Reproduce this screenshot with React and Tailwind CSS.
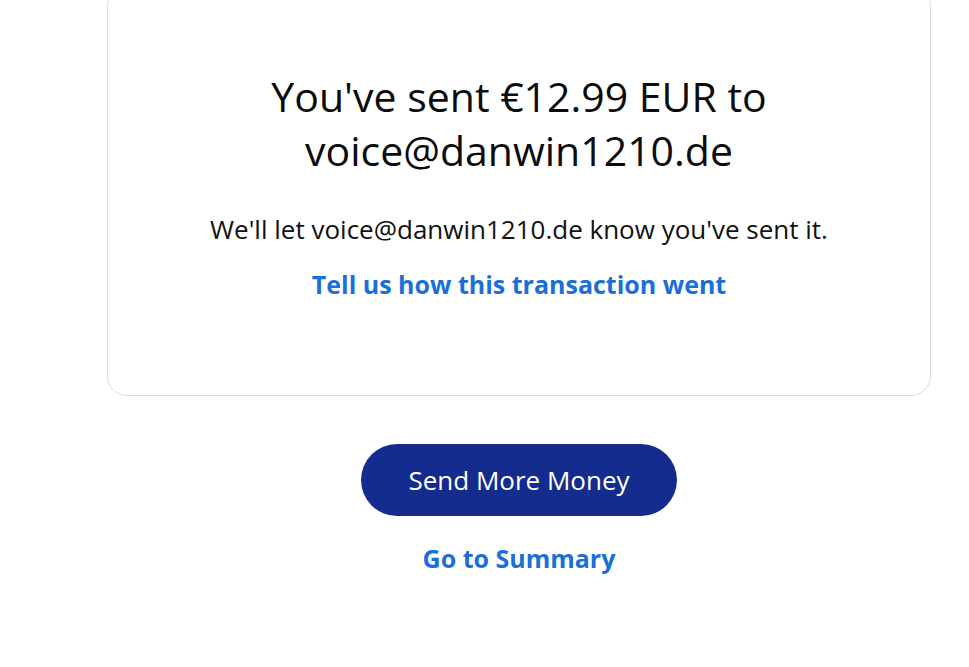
export default function App() {
  return (
    <div className="min-h-screen w-full overflow-hidden bg-white" style={{ fontFamily: "'Open Sans', 'Noto Sans', sans-serif" }}>
      <div className="ml-[107px] mt-[-14px] flex w-[824px] flex-col items-center rounded-[20px] border border-[#dcdcdc] px-10 pb-[95px] pt-[82px] text-center">
        <h1 className="text-[41px] font-normal leading-[54px] text-[#0b0b0b]">
          You've sent €12.99 EUR to
          <br />
          voice@danwin1210.de
        </h1>
        <p className="mt-[36px] text-[26px] leading-[32px] text-[#111]">
          We'll let voice@danwin1210.de know you've sent it.
        </p>
        <a href="#" className="mt-[23px] text-[25px] font-bold leading-[32px] text-[#1a6fd8]">
          Tell us how this transaction went
        </a>
      </div>

      <div className="ml-[107px] flex w-[824px] flex-col items-center">
        <button
          type="button"
          className="mt-[48px] h-[72px] w-[316px] rounded-full bg-[#142c8e] text-[26px] font-medium text-white"
        >
          Send More Money
        </button>
        <a href="#" className="mt-[26px] text-[25px] font-bold leading-[32px] text-[#1a6fd8]">
          Go to Summary
        </a>
      </div>
    </div>
  )
}
